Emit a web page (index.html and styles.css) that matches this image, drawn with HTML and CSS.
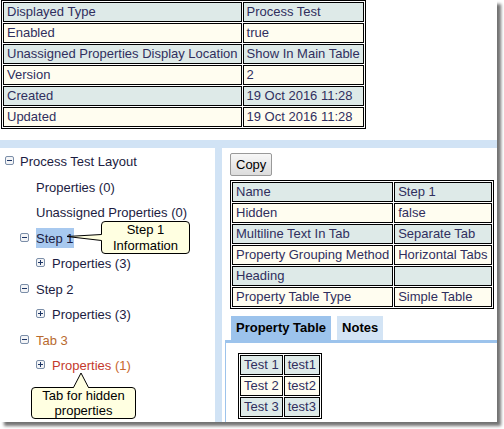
FILE: index.html
```html
<!DOCTYPE html>
<html>
<head>
<meta charset="utf-8">
<link rel="stylesheet" href="styles.css">
</head>
<body>
<div class="window">
  <table class="grid top">
    <tr class="a"><td>Displayed Type</td><td>Process Test</td></tr>
    <tr class="b"><td>Enabled</td><td>true</td></tr>
    <tr class="a"><td>Unassigned Properties Display Location</td><td>Show In Main Table</td></tr>
    <tr class="b"><td>Version</td><td>2</td></tr>
    <tr class="a"><td>Created</td><td>19 Oct 2016 11:28</td></tr>
    <tr class="b"><td>Updated</td><td>19 Oct 2016 11:28</td></tr>
  </table>

  <div class="split">
    <div class="tree">
      <div class="node l0"><svg class="tw" width="9" height="9" viewBox="0 0 9 9"><rect x="0.5" y="0.5" width="8" height="8" rx="1.5" fill="#f3f4f6" stroke="#7b8ea8"/><path d="M2 4.5h5" stroke="#1d3566"/></svg>Process Test Layout</div>
      <div class="node l1"><span class="sp"></span>Properties (0)</div>
      <div class="node l1"><span class="sp"></span>Unassigned Properties (0)</div>
      <div class="node l1"><svg class="tw" width="9" height="9" viewBox="0 0 9 9"><rect x="0.5" y="0.5" width="8" height="8" rx="1.5" fill="#f3f4f6" stroke="#7b8ea8"/><path d="M2 4.5h5" stroke="#1d3566"/></svg><span class="sel">Step 1</span></div>
      <div class="node l2"><svg class="tw" width="9" height="9" viewBox="0 0 9 9"><rect x="0.5" y="0.5" width="8" height="8" rx="1.5" fill="#f3f4f6" stroke="#7b8ea8"/><path d="M2 4.5h5M4.5 2v5" stroke="#1d3566"/></svg>Properties (3)</div>
      <div class="node l1"><svg class="tw" width="9" height="9" viewBox="0 0 9 9"><rect x="0.5" y="0.5" width="8" height="8" rx="1.5" fill="#f3f4f6" stroke="#7b8ea8"/><path d="M2 4.5h5" stroke="#1d3566"/></svg>Step 2</div>
      <div class="node l2"><svg class="tw" width="9" height="9" viewBox="0 0 9 9"><rect x="0.5" y="0.5" width="8" height="8" rx="1.5" fill="#f3f4f6" stroke="#7b8ea8"/><path d="M2 4.5h5M4.5 2v5" stroke="#1d3566"/></svg>Properties (3)</div>
      <div class="node l1 tab"><svg class="tw" width="9" height="9" viewBox="0 0 9 9"><rect x="0.5" y="0.5" width="8" height="8" rx="1.5" fill="#f3f4f6" stroke="#7b8ea8"/><path d="M2 4.5h5" stroke="#1d3566"/></svg>Tab 3</div>
      <div class="node l2 hid"><svg class="tw" width="9" height="9" viewBox="0 0 9 9"><rect x="0.5" y="0.5" width="8" height="8" rx="1.5" fill="#f3f4f6" stroke="#7b8ea8"/><path d="M2 4.5h5M4.5 2v5" stroke="#1d3566"/></svg>Properties <span class="cnt">(1)</span></div>
    </div>

    <div class="detail">
      <div class="detail-head">
        <button class="btn">Copy</button>
        <table class="grid props">
          <tr class="a"><td>Name</td><td>Step 1</td></tr>
          <tr class="b"><td>Hidden</td><td>false</td></tr>
          <tr class="a"><td>Multiline Text In Tab</td><td>Separate Tab</td></tr>
          <tr class="b"><td>Property Grouping Method</td><td>Horizontal Tabs</td></tr>
          <tr class="a"><td>Heading</td><td></td></tr>
          <tr class="b"><td>Property Table Type</td><td>Simple Table</td></tr>
        </table>
      </div>
      <div class="tabs">
        <div class="tablist">
          <div class="tabitem on">Property Table</div>
          <div class="tabitem">Notes</div>
        </div>
        <div class="panel">
          <table class="grid">
            <tr class="a"><td>Test 1</td><td>test1</td></tr>
            <tr class="b"><td>Test 2</td><td>test2</td></tr>
            <tr class="a"><td>Test 3</td><td>test3</td></tr>
          </table>
        </div>
      </div>
    </div>
  </div>

  <div class="callout c1">Step 1<br>Information</div>
  <div class="callout c2">Tab for hidden<br>properties</div>
  <svg class="pointers" width="497" height="422" viewBox="0 0 497 422">
    <polygon points="67,236.5 102,234.5 102,240.5" fill="#ffffe1"/>
    <polyline points="101.5,234.5 67,236.5 101.5,240.5" fill="none" stroke="#000" stroke-width="1"/>
    <polygon points="73.5,388 81,373 88.5,388" fill="#ffffe1"/>
    <polyline points="73.5,387.5 81,373 88.5,387.5" fill="none" stroke="#000" stroke-width="1"/>
  </svg>
</div>
</body>
</html>
```

FILE: styles.css
```css
html, body {
  margin: 0;
  padding: 0;
  background: #fff;
}

body {
  font-family: "Liberation Sans", Arial, sans-serif;
  font-size: 13px;
  width: 504px;
  height: 429px;
  overflow: hidden;
}

.window {
  position: relative;
  width: 497px;
  height: 422px;
  background: #fff;
  box-shadow: 4px 4px 3px rgba(0, 0, 0, 0.55);
  display: flex;
  flex-direction: column;
}

.grid {
  border: 1px solid #000;
  border-collapse: separate;
  border-spacing: 1px;
  color: #302f5e;
}

.grid td {
  border: 1px solid #000;
  padding: 1px 3px;
  line-height: 16px;
  height: 16px;
  white-space: nowrap;
}

.grid tr.a td {
  background: #deeae8;
}

.grid tr.b td {
  background: #fffdf0;
}

.top {
  align-self: flex-start;
  margin-left: 1px;
}

.split {
  flex: 1;
  display: flex;
  gap: 7px;
  margin-top: 11px;
  padding-top: 8px;
  background: #d1e3f5;
}

.tree {
  width: 215px;
  background: #fff;
  padding-top: 1px;
}

.node {
  height: 25.5px;
  line-height: 25.5px;
  white-space: nowrap;
  color: #1c1c42;
}

.l0 { padding-left: 5px; }
.l1 { padding-left: 20px; }
.l2 { padding-left: 36px; }

.tw {
  vertical-align: 1px;
  margin-right: 7px;
}

.l0 .tw {
  margin-right: 6px;
}

.sp {
  display: inline-block;
  width: 16px;
}

.sel {
  background: #a8c9ef;
  padding: 3px 0 2px;
}

.tab {
  color: #b86a2e;
}

.hid {
  color: #c43a2c;
}

.hid .cnt {
  color: #c8662c;
}

.detail {
  flex: 1;
  background: #fff;
  display: flex;
  flex-direction: column;
}

.detail-head {
  padding: 5px 0 0 8px;
}

.btn {
  display: block;
  height: 23px;
  padding: 0 5px;
  font-family: "Liberation Sans", Arial, sans-serif;
  font-size: 13px;
  color: #000;
  border: 1px solid #999;
  border-radius: 2px;
  background: linear-gradient(#f7f7f7, #dcdcdc);
}

.props {
  margin-top: 4px;
}

.tabs {
  flex: 1;
  margin: 7px 0 0 3px;
  display: flex;
  flex-direction: column;
}

.tablist {
  display: flex;
  gap: 6px;
  padding-left: 6px;
}

.tabitem {
  height: 24px;
  line-height: 24px;
  padding: 0 5px;
  font-weight: bold;
  color: #000;
  background: #d3e4f5;
}

.tabitem.on {
  background: #9cc3ec;
}

.panel {
  flex: 1;
  border-top: 3px solid #9cc3ec;
  border-left: 1px solid #9cc3ec;
  padding: 10px 0 0 12px;
}

.callout {
  position: absolute;
  box-sizing: border-box;
  background: #ffffe1;
  border: 1px solid #000;
  border-radius: 4px;
  text-align: center;
  color: #000;
}

.c1 {
  left: 101px;
  top: 221px;
  width: 89px;
  height: 33px;
  line-height: 16px;
}

.c2 {
  left: 31px;
  top: 387px;
  width: 105px;
  height: 32px;
  line-height: 15px;
}

.pointers {
  position: absolute;
  left: 0;
  top: 0;
  pointer-events: none;
}
```
